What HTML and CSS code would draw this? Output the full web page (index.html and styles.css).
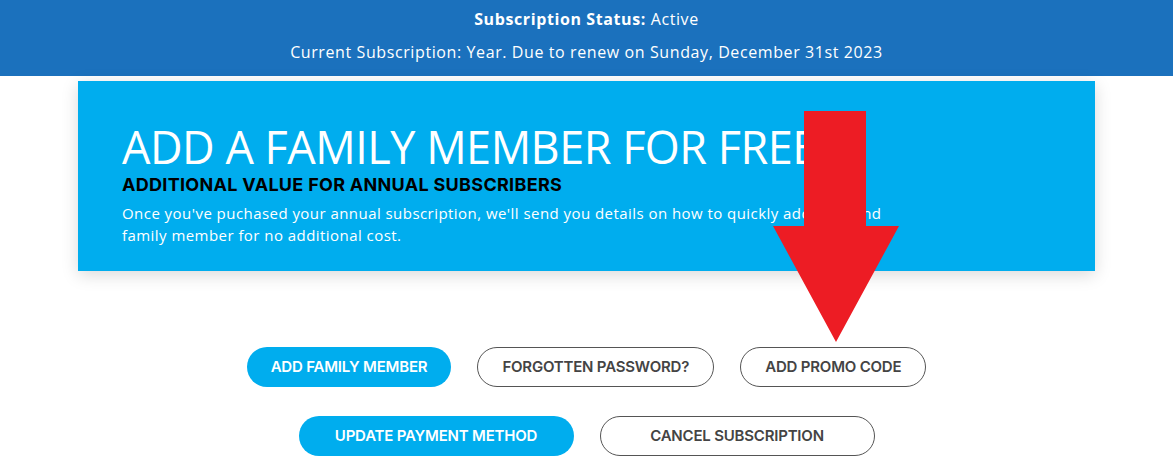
FILE: index.html
```html
<!DOCTYPE html>
<html lang="en">
<head>
    <meta charset="UTF-8">
    <meta name="viewport" content="width=device-width, initial-scale=1.0">
    <title>Subscription</title>
    <link rel="stylesheet" href="styles.css">
</head>
<body>
    <div class="status-bar">
        <p><strong>Subscription Status:</strong> Active</p>
        <p>Current Subscription: Year. Due to renew on Sunday, December 31st 2023</p>
    </div>

    <div class="page">
        <div class="promo">
            <h1>ADD A FAMILY MEMBER FOR FREE</h1>
            <h2>ADDITIONAL VALUE FOR ANNUAL SUBSCRIBERS</h2>
            <p>Once you've puchased your annual subscription, we'll send you details on how to quickly add a second family member for no additional cost.</p>
        </div>

        <div class="actions">
            <div class="actions-row">
                <a class="btn btn-solid" href="#">Add Family Member</a>
                <a class="btn btn-outline" href="#">Forgotten Password?</a>
                <a class="btn btn-outline" href="#">Add Promo Code</a>
            </div>
            <div class="actions-row wide">
                <a class="btn btn-solid" href="#">Update Payment Method</a>
                <a class="btn btn-outline" href="#">Cancel Subscription</a>
            </div>
        </div>

        <!-- pointer drawn over the banner -->
        <svg class="arrow" width="127" height="232" viewBox="0 0 127 232">
            <polygon points="31,0 93,0 93,115 126,115 63,231 0,115 31,115" fill="#ed1c24"/>
        </svg>
    </div>
</body>
</html>
```

FILE: styles.css
```css
body {
    margin: 0;
    font-family: "Open Sans", sans-serif;
    background-color: #fff;
}
.status-bar {
    background-color: #1b71bd;
    color: #fff;
    text-align: center;
    height: 76px;
    padding-top: 8px;
    box-sizing: border-box;
    font-size: 16px;
    letter-spacing: 0.6px;
}
.status-bar p {
    margin: 0 0 11px;
    line-height: 22px;
}
.page {
    position: relative;
    padding-top: 5px;
}
.promo {
    width: 1017px;
    margin: 0 auto;
    box-sizing: border-box;
    background-color: #00adee;
    padding: 44px 44px 26px;
    height: 190px;
    box-shadow: 0 4px 16px rgba(0, 0, 0, 0.15);
    color: #fff;
}
.promo h1 {
    margin: 0;
    font-weight: 400;
    font-size: 45px;
    line-height: 44px;
    letter-spacing: -0.5px;
    white-space: nowrap;
}
.promo h2 {
    margin: 5px 0 0;
    color: #000;
    font-family: "Inter", sans-serif;
    font-weight: 700;
    font-size: 18px;
    line-height: 22px;
    letter-spacing: 0.3px;
}
.promo p {
    margin: 6px 0 0;
    font-size: 15px;
    line-height: 22px;
    letter-spacing: 0.45px;
    max-width: 800px;
}
.actions {
    display: flex;
    flex-direction: column;
    gap: 29px;
    margin-top: 76px;
}
.actions-row {
    display: flex;
    justify-content: center;
    gap: 26px;
}
.actions-row.wide .btn {
    width: 275px;
}
.btn {
    display: inline-block;
    height: 40px;
    line-height: 40px;
    padding: 0 24px;
    border-radius: 20px;
    box-sizing: border-box;
    text-align: center;
    font-family: "Inter", sans-serif;
    font-weight: 600;
    font-size: 15px;
    text-transform: uppercase;
    text-decoration: none;
    letter-spacing: -0.2px;
}
.btn-solid {
    background-color: #00adee;
    color: #fff;
}
.btn-outline {
    border: 1px solid #555;
    line-height: 38px;
    color: #444;
}
.arrow {
    position: absolute;
    left: 773px;
    top: 35px;
}
```
